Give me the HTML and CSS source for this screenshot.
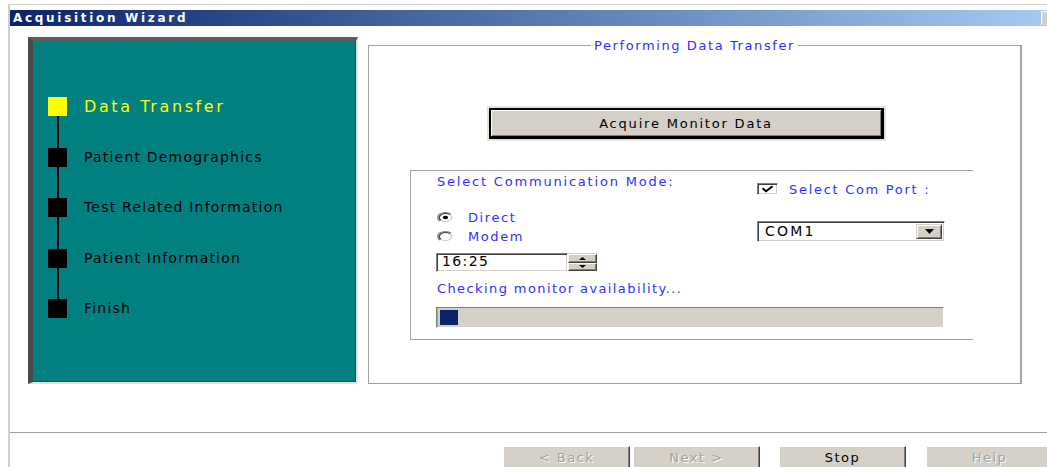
FILE: index.html
```html
<!DOCTYPE html>
<html lang="en">
<head>
<meta charset="utf-8">
<title>Acquisition Wizard</title>
<link rel="stylesheet" href="styles.css">
</head>
<body>
<div class="window">
  <div class="titlebar">
    <span class="title">Acquisition Wizard</span>
    <span class="title-ctrl"></span>
  </div>

  <div class="main">
    <ol class="steps">
      <li class="step current"><span class="marker"></span><span class="step-label">Data Transfer</span></li>
      <li class="step"><span class="marker"></span><span class="step-label">Patient Demographics</span></li>
      <li class="step"><span class="marker"></span><span class="step-label">Test Related Information</span></li>
      <li class="step"><span class="marker"></span><span class="step-label">Patient Information</span></li>
      <li class="step"><span class="marker"></span><span class="step-label">Finish</span></li>
    </ol>

    <fieldset class="group">
      <legend class="group-title">Performing Data Transfer</legend>
      <button class="btn-default" type="button">Acquire Monitor Data</button>

      <div class="comm">
        <div class="comm-cols">
          <div class="comm-mode">
            <div class="label">Select Communication Mode:</div>
            <label class="radio first">
              <svg class="radio-icon" viewBox="0 0 12 12" preserveAspectRatio="none">
                <circle cx="6" cy="6" r="5" fill="#fff"/>
                <path d="M9.89 2.11 A5.5 5.5 0 0 0 2.11 9.89" stroke="#808080" fill="none"/>
                <path d="M9.18 2.82 A4.5 4.5 0 0 0 2.82 9.18" stroke="#404040" fill="none"/>
                <path d="M9.18 2.82 A4.5 4.5 0 0 1 2.82 9.18" stroke="#d4d0c8" fill="none"/>
                <circle cx="6" cy="6" r="1.9" fill="#000"/>
              </svg>
              <span>Direct</span>
            </label>
            <label class="radio">
              <svg class="radio-icon" viewBox="0 0 12 12" preserveAspectRatio="none">
                <circle cx="6" cy="6" r="5" fill="#fff"/>
                <path d="M9.89 2.11 A5.5 5.5 0 0 0 2.11 9.89" stroke="#808080" fill="none"/>
                <path d="M9.18 2.82 A4.5 4.5 0 0 0 2.82 9.18" stroke="#404040" fill="none"/>
                <path d="M9.18 2.82 A4.5 4.5 0 0 1 2.82 9.18" stroke="#d4d0c8" fill="none"/>
              </svg>
              <span>Modem</span>
            </label>
            <div class="spin">
              <span class="spin-value">16:25</span>
              <span class="spin-btns">
                <span class="spin-btn">
                  <svg class="tri" viewBox="0 0 5 3" preserveAspectRatio="none"><polygon points="0,3 5,3 2.5,0" fill="#000"/></svg>
                </span>
                <span class="spin-btn">
                  <svg class="tri" viewBox="0 0 5 3" preserveAspectRatio="none"><polygon points="0,0 5,0 2.5,3" fill="#000"/></svg>
                </span>
              </span>
            </div>
            <div class="label status">Checking monitor availability...</div>
          </div>

          <div class="comm-port">
            <label class="check">
              <span class="checkbox">
                <svg class="check-mark" viewBox="0 0 15 8" preserveAspectRatio="none">
                  <path d="M2.5 3.2 L6 6.3 L12.5 1.2" stroke="#000" stroke-width="2" fill="none"/>
                </svg>
              </span>
              <span>Select Com Port :</span>
            </label>
            <div class="combo">
              <span class="combo-value">COM1</span>
              <span class="combo-btn">
                <svg class="combo-arrow" viewBox="0 0 7 4" preserveAspectRatio="none"><polygon points="0,0 7,0 3.5,4" fill="#000"/></svg>
              </span>
            </div>
          </div>
        </div>

        <div class="progress"><span class="progress-chunk"></span></div>
      </div>
    </fieldset>
  </div>

  <div class="footer">
    <button class="btn" type="button" disabled>&lt; Back</button>
    <button class="btn next" type="button" disabled>Next &gt;</button>
    <button class="btn stop" type="button">Stop</button>
    <button class="btn help" type="button" disabled>Help</button>
  </div>
</div>
</body>
</html>
```

FILE: styles.css
```css
* {
  box-sizing: border-box;
}

html,
body {
  margin: 0;
  height: 100%;
  overflow: hidden;
  background: #fff;
}

body {
  font-family: "DejaVu Sans", "Liberation Sans", sans-serif;
  font-size: 13px;
  color: #000;
}

/* ---------- window frame ---------- */
.window {
  margin: 4px 0 0 8px;
  width: 1039px;
  height: 480px;
  border-top: 1px solid #cfcfcf;
  border-left: 2px solid #d4d0c8;
  padding-top: 5px;
}

.titlebar {
  display: flex;
  align-items: center;
  justify-content: space-between;
  height: 16px;
  background: linear-gradient(to right, #0a246a, #a6caf0);
}

.title {
  padding-left: 3px;
  color: #fff;
  font-weight: bold;
  font-size: 12px;
  letter-spacing: 2.7px;
  line-height: 16px;
}

.title-ctrl {
  width: 6px;
  height: 14px;
  background: #d4d0c8;
  border-top: 1px solid #fff;
  border-left: 1px solid #fff;
}

/* ---------- body area ---------- */
.main {
  display: flex;
  align-items: flex-start;
  gap: 10px;
  height: 406px;
  padding: 11px 0 48px 18px;
}

/* wizard step list */
.steps {
  margin: 0;
  list-style: none;
  flex: none;
  width: 330px;
  height: 347px;
  padding: 56px 0 0 15px;
  background: #008080;
  border-style: solid;
  border-width: 4px 2px 2px 5px;
  border-color: #5e5e5e #e2e2e2 #e2e2e2 #4a4a4a;
  box-shadow: inset -1px -1px 0 #404040;
}

.step {
  position: relative;
  display: flex;
  align-items: center;
  gap: 17px;
  height: 19px;
  margin-bottom: 31.6px;
}

.step:last-child {
  margin-bottom: 0;
}

.step:not(:last-child)::after {
  content: "";
  position: absolute;
  left: 9px;
  top: 19px;
  width: 2px;
  height: 32px;
  background: #000;
}

.marker {
  flex: none;
  width: 19px;
  height: 19px;
  background: #000;
}

.step-label {
  font-size: 14px;
  letter-spacing: 1.2px;
  line-height: 19px;
  white-space: nowrap;
}

.step.current .marker {
  background: #ffff00;
}

.step.current .step-label {
  color: #ffff00;
  font-size: 16px;
  letter-spacing: 2.6px;
}

/* ---------- transfer group ---------- */
.group {
  flex: none;
  margin: 0;
  padding: 0;
  min-width: 0;
  width: 654px;
  height: 347px;
  border: 1px solid #a0a0a0;
  border-right: 2px solid #a6a6a6;
}

.group-title {
  margin: 0 auto;
  padding: 0 3px;
  color: #3030ff;
  font-size: 13px;
  letter-spacing: 1.6px;
  line-height: 17px;
}

.btn-default {
  display: block;
  width: 395px;
  height: 31px;
  margin: 54px 0 0 120px;
  padding: 0;
  font-family: inherit;
  font-size: 13px;
  letter-spacing: 1.8px;
  color: #000;
  background: #d4d0c8;
  border-style: solid;
  border-color: #000;
  border-width: 2px 3px 3px 2px;
  box-shadow: 0 0 0 2px #e4e2dc, inset 1px 1px 0 #fff, inset -1px -1px 0 #808080;
  appearance: none;
}

/* communication settings */
.comm {
  width: 563px;
  height: 170px;
  margin: 31px 0 0 41px;
  padding: 3px 0 0 25px;
  border: 1px solid #a0a0a0;
  border-right: none;
}

.comm-cols {
  display: flex;
}

.comm-mode {
  width: 321px;
  flex: none;
}

.comm-port {
  width: 188px;
  flex: none;
  padding-top: 7px;
}

.label {
  padding-left: 1px;
  color: #3030ff;
  line-height: 16px;
  letter-spacing: 1.4px;
  white-space: nowrap;
}

.label:first-child {
  letter-spacing: 1.8px;
}

.radio {
  display: flex;
  align-items: center;
  gap: 14px;
  height: 19px;
  padding-left: 1px;
  color: #3030ff;
  letter-spacing: 1.6px;
}

.radio.first {
  margin-top: 18px;
}

.radio-icon {
  flex: none;
  width: 17px;
  height: 11px;
}

.spin {
  display: flex;
  width: 161px;
  height: 19px;
  margin-top: 7px;
}

.spin-value {
  flex: 1;
  padding-left: 5px;
  line-height: 15px;
  font-size: 14px;
  letter-spacing: 1.4px;
  background: #fff;
  border: 1px solid;
  border-color: #808080 #fff #fff #808080;
  box-shadow: inset 1px 1px 0 #404040, inset -1px -1px 0 #d4d0c8;
}

.spin-btns {
  flex: none;
  width: 29px;
  display: flex;
  flex-direction: column;
  border-top: 1px solid #d4d0c8;
  border-bottom: 1px solid #fff;
}

.spin-btn {
  flex: 1;
  display: flex;
  align-items: center;
  justify-content: center;
  background: #d4d0c8;
  border: 1px solid;
  border-color: #fff #404040 #404040 #fff;
  box-shadow: inset -1px -1px 0 #808080;
}

.tri {
  width: 7px;
  height: 3px;
}

.status {
  margin-top: 9px;
}

.check {
  display: flex;
  align-items: center;
  gap: 11px;
  height: 16px;
  color: #3030ff;
  letter-spacing: 1.7px;
  white-space: nowrap;
}

.checkbox {
  flex: none;
  display: flex;
  align-items: center;
  justify-content: center;
  width: 21px;
  height: 12px;
  background: #fff;
  border: 1px solid;
  border-color: #808080 #fff #fff #808080;
  box-shadow: inset 1px 1px 0 #404040, inset -1px -1px 0 #d4d0c8;
}

.check-mark {
  width: 15px;
  height: 8px;
}

.combo {
  display: flex;
  align-items: center;
  width: 188px;
  height: 21px;
  margin-top: 24px;
  padding: 2px;
  background: #fff;
  border: 1px solid;
  border-color: #808080 #fff #fff #808080;
  box-shadow: inset 1px 1px 0 #404040, inset -1px -1px 0 #d4d0c8;
}

.combo-value {
  flex: 1;
  padding-left: 5px;
  font-size: 14px;
  letter-spacing: 2.2px;
  line-height: 15px;
}

.combo-btn {
  flex: none;
  display: flex;
  align-items: center;
  justify-content: center;
  width: 26px;
  height: 15px;
  background: #d4d0c8;
  border: 1px solid;
  border-color: #d4d0c8 #404040 #404040 #d4d0c8;
  box-shadow: inset 1px 1px 0 #fff, inset -1px -1px 0 #808080;
}

.combo-arrow {
  width: 9px;
  height: 5px;
}

.progress {
  display: flex;
  width: 508px;
  height: 21px;
  margin-top: 10px;
  padding: 2px 3px;
  background: #d4d0c8;
  border: 1px solid;
  border-color: #808080 #fff #fff #808080;
  box-shadow: inset 1px 0 0 #a0a0a0;
}

.progress-chunk {
  width: 18px;
  background: #0a246a;
}

/* ---------- button row ---------- */
.footer {
  display: flex;
  padding: 13px 0 0 493px;
  border-top: 1px solid #a0a0a0;
}

.btn {
  flex: none;
  width: 127px;
  height: 24px;
  padding: 0 0 2px;
  font-family: inherit;
  font-size: 13px;
  letter-spacing: 1.5px;
  color: #000;
  background: #d4d0c8;
  border: 1px solid;
  border-color: #fff #404040 #404040 #fff;
  box-shadow: inset -1px -1px 0 #808080;
  appearance: none;
}

.btn:disabled {
  color: #a0a0a0;
  text-shadow: 1px 1px 0 #fff;
}

.btn.next {
  margin-left: 3px;
}

.btn.stop {
  margin-left: 19px;
}

.btn.help {
  margin-left: 20px;
}
```
